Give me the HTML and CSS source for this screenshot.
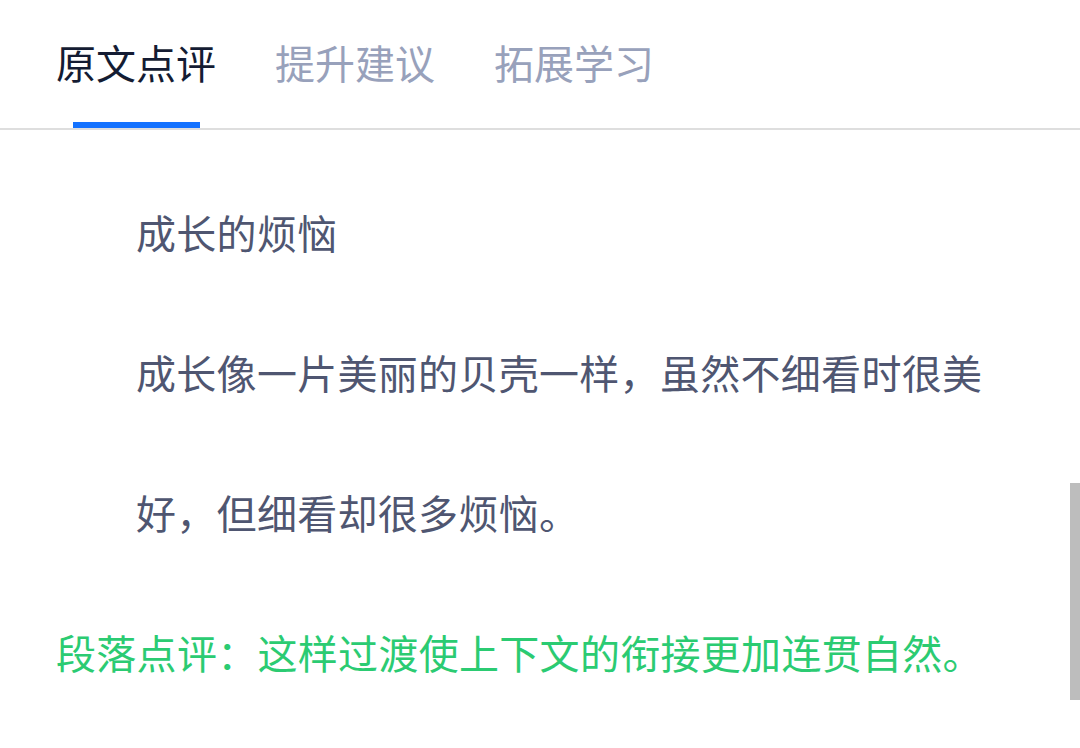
FILE: index.html
```html
<!DOCTYPE html>
<html lang="zh-CN">
<head>
  <meta charset="UTF-8">
  <meta name="viewport" content="width=device-width, initial-scale=1.0">
  <title>原文点评</title>
  <link rel="stylesheet" href="styles.css">
</head>
<body>
  <div class="page">
    <div class="tabs">
      <div class="tab active"><span class="tab-label">原文点评</span><span class="tab-bar"></span></div>
      <div class="tab"><span class="tab-label">提升建议</span></div>
      <div class="tab"><span class="tab-label">拓展学习</span></div>
    </div>

    <div class="content">
      <p class="line">成长的烦恼</p>
      <p class="line">成长像一片美丽的贝壳一样，虽然不细看时很美好，但细看却很多烦恼。</p>
      <p class="comment">段落点评：这样过渡使上下文的衔接更加连贯自然。</p>
    </div>

    <div class="scrollbar"></div>
  </div>
</body>
</html>
```

FILE: styles.css
```css
body {
  margin: 0;
  background: #fff;
  font-family: "Noto Sans CJK SC", "Noto Sans", sans-serif;
}

.page {
  position: relative;
  width: 1080px;
  height: 748px;
  overflow: hidden;
}

.tabs {
  display: flex;
  gap: 59px;
  padding-left: 56px;
  height: 128px;
  border-bottom: 2px solid #dedede;
}

.tab {
  display: flex;
  flex-direction: column;
  align-items: center;
  font-size: 40px;
  color: #98a1bb;
}

.tab-label {
  padding-top: 34px;
  line-height: 56px;
}

.tab.active {
  color: #141c33;
}

.tab-bar {
  margin-top: auto;
  width: 127px;
  height: 6px;
  background: #1472ff;
}

.content {
  padding: 32px 90px 0 56px;
}

.line {
  margin: 0;
  padding-left: 80px;
  font-size: 40px;
  letter-spacing: 0.3px;
  line-height: 140px;
  color: #4f5671;
}

.comment {
  margin: 0;
  font-size: 40px;
  letter-spacing: 0.3px;
  line-height: 140px;
  color: #2bcb72;
}

.scrollbar {
  position: absolute;
  right: 0;
  top: 483px;
  width: 10px;
  height: 217px;
  background: #bdbdbd;
}
```
